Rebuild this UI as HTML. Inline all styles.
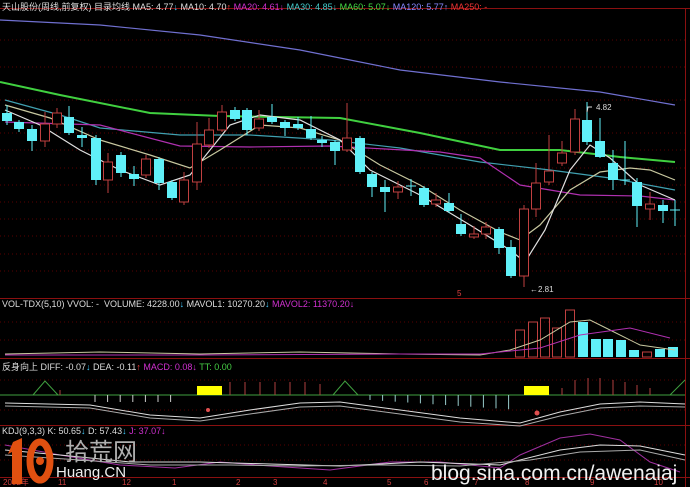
<!DOCTYPE html>
<html><head><meta charset="utf-8"><style>
html,body{margin:0;padding:0;background:#000;width:690px;height:487px;overflow:hidden}
.t{position:absolute;font:9px "Liberation Sans","Noto Sans CJK SC",sans-serif;white-space:nowrap}
</style></head><body>
<svg id="s" width="690" height="487" style="position:absolute;left:0;top:0">
<g stroke="#5a0000" stroke-width="1" stroke-dasharray="1,3">
<line x1="0" y1="40" x2="685" y2="40"/><line x1="0" y1="67" x2="685" y2="67"/><line x1="0" y1="100" x2="685" y2="100"/><line x1="0" y1="133" x2="685" y2="133"/><line x1="0" y1="150" x2="685" y2="150"/><line x1="0" y1="168" x2="685" y2="168"/><line x1="0" y1="185" x2="685" y2="185"/><line x1="0" y1="202" x2="685" y2="202"/><line x1="0" y1="219" x2="685" y2="219"/><line x1="0" y1="236" x2="685" y2="236"/><line x1="0" y1="254" x2="685" y2="254"/><line x1="0" y1="271" x2="685" y2="271"/>
<line x1="0" y1="322" x2="685" y2="322"/><line x1="0" y1="340" x2="685" y2="340"/><line x1="0" y1="380" x2="685" y2="380"/><line x1="0" y1="410" x2="685" y2="410"/><line x1="0" y1="445" x2="685" y2="445"/><line x1="0" y1="460" x2="685" y2="460"/>
</g>
<g stroke="#8a1010" stroke-width="1">
<line x1="0" y1="8.5" x2="690" y2="8.5"/><line x1="0" y1="298.5" x2="690" y2="298.5"/><line x1="0" y1="358.5" x2="690" y2="358.5"/><line x1="0" y1="425.5" x2="690" y2="425.5"/><line x1="0" y1="477.5" x2="690" y2="477.5"/><line x1="685.5" y1="8" x2="685.5" y2="487"/>
</g>
<g fill="none" stroke-width="1.2">
<polyline stroke="#7070d0" points="0,20 100,25 200,35 300,50 400,70 500,82 600,92 675,105"/>
<polyline stroke="#40d040" stroke-width="2" points="0,82 60,95 150,113 220,116 340,118 420,133 500,150 560,150 620,157 675,162"/>
<polyline stroke="#40a0b0" points="5,100 60,115 100,128 180,135 250,135 330,140 400,148 480,162 550,170 610,178 675,190"/>
<polyline stroke="#b030b0" points="5,122 100,125 180,146 250,147 330,146 440,152 480,158 520,185 580,195 640,196 675,200"/>
<polyline stroke="#c8c8a0" points="5,105 50,118 100,140 150,155 190,168 220,150 260,125 300,128 340,140 380,165 420,185 460,210 500,232 520,240 540,225 570,190 600,172 630,168 650,170 675,180"/>
<polyline stroke="#e0e0e0" points="5,110 40,125 80,150 120,170 160,185 190,175 230,125 260,115 300,120 340,140 370,170 420,195 470,225 510,250 525,262 545,230 570,170 590,145 610,158 640,185 675,200"/>
</g>
<g id="c"></g>
<text x="596" y="110" fill="#ddd" font-size="8" font-family="Liberation Sans">4.82</text>
<polyline points="592,107 588,107 587,112" fill="none" stroke="#ddd"/>
<text x="530" y="292" fill="#ddd" font-size="8" font-family="Liberation Sans">←2.81</text>
<text x="457" y="296" fill="#e04040" font-size="8" font-family="Liberation Sans">5</text>
<g fill="none" stroke-width="1">
<polyline stroke="#c8c8a0" points="5,354 100,352 200,354 300,352 400,354 480,355 510,350 540,340 570,322 590,320 610,330 640,345 675,350"/>
<polyline stroke="#b030b0" points="5,355 200,355 400,354 480,354 540,348 580,335 630,328 670,338"/>
<polyline stroke="#40a040" points="0,395 685,395"/>
<polyline stroke="#40a040" points="33,395 45,381 58,395"/><polyline stroke="#40a040" points="333,395 345,381 358,395"/><polyline stroke="#40a040" points="670,395 685,380"/>
<polyline stroke="#ddd" points="5,403 90,405 150,415 200,418 250,410 300,403 340,402 400,410 460,418 520,423 560,412 600,404 640,402 685,404"/>
<polyline stroke="#aaa" points="5,406 90,408 150,418 200,421 250,414 300,407 340,406 400,414 460,422 520,426 560,416 600,408 640,406 685,407"/>
<polyline stroke="#a030a0" points="5,445 60,455 120,465 175,468 220,462 270,466 330,470 390,462 440,462 500,468 520,455 560,438 590,434 620,440 650,462 680,472"/>
<polyline stroke="#ddd" points="5,450 60,455 130,462 200,462 270,464 340,466 420,462 500,465 560,450 600,445 640,446 685,455"/>
<polyline stroke="#aaa" points="5,455 80,460 150,465 230,465 300,466 380,465 460,466 530,460 580,452 640,450 685,460"/>
</g>
<g id="m"></g>
<rect x="197" y="386" width="25" height="9" fill="#ffff00"/>
<rect x="524" y="386" width="25" height="9" fill="#ffff00"/>
<circle cx="208" cy="410" r="2" fill="#e05050"/><circle cx="537" cy="413" r="2.5" fill="#e05050"/>
<text x="3" y="485" fill="#d04040" font-size="8" font-family="Liberation Sans">2002年</text>
<g fill="#d04040" font-size="8" font-family="Liberation Sans"><text x="58" y="485">11</text><text x="122" y="485">12</text><text x="172" y="485">1</text><text x="236" y="485">2</text><text x="273" y="485">3</text><text x="323" y="485">4</text><text x="387" y="485">5</text><text x="424" y="485">6</text><text x="474" y="485">7</text><text x="525" y="485">8</text><text x="590" y="485">9</text><text x="654" y="485">10</text></g>
<path d="M13,442 L22,438 L22,484 L12,484 L12,452 L8,454 Z" fill="#e05010"/>
<ellipse cx="40" cy="461" rx="10" ry="19" fill="none" stroke="#e05010" stroke-width="7"/>
<circle cx="40" cy="461" r="4" fill="#e05010"/>
<text x="65" y="460" fill="#b0b0b0" font-size="24" font-family="Noto Sans CJK SC,sans-serif">拾荒网</text>
<text x="56" y="477" fill="#eee" font-size="15" font-family="Liberation Sans">Huang.CN</text>
<text x="431" y="480" fill="#f0f0f0" font-size="21" font-family="Liberation Sans">blog.sina.com.cn/awenaiaj</text>
</svg>
<div class="t" style="left:2px;top:0px;color:#ddd">天山股份(周线,前复权) 目录均线 MA5: 4.77<span style="color:#4cf">↓</span> MA10: 4.70<span style="color:#f44">↑</span> <span style="color:#d030d0">MA20: 4.61↓</span> <span style="color:#4cc">MA30: 4.85↓</span> <span style="color:#4d4">MA60: 5.07↓</span> <span style="color:#88f">MA120: 5.77↑</span> <span style="color:#e33">MA250: -</span></div>
<div class="t" style="left:2px;top:299px;color:#ddd">VOL-TDX(5,10) VVOL: -&nbsp; VOLUME: 4228.00<span style="color:#4cf">↓</span> MAVOL1: 10270.20<span style="color:#4cf">↓</span> <span style="color:#d030d0">MAVOL2: 11370.20↓</span></div>
<div class="t" style="left:2px;top:360px;color:#ddd">反身向上 DIFF: -0.07<span style="color:#4cf">↓</span> DEA: -0.11<span style="color:#f44">↑</span> <span style="color:#d030d0">MACD: 0.08↓</span> <span style="color:#4c4">TT: 0.00</span></div>
<div class="t" style="left:2px;top:426px;color:#ddd">KDJ(9,3,3) K: 50.65<span style="color:#4cf">↓</span> D: 57.43<span style="color:#4cf">↓</span> <span style="color:#d030d0">J: 37.07↓</span></div>
<script>
var C=[[7,113,121,105,125,'c'],[19,122,129,120,132,'c'],[32,129,141,125,151,'c'],[45,124,141,112,147,'r'],[57,113,124,108,128,'r'],[69,117,133,106,135,'c'],[82,135,138,127,147,'c'],[96,138,180,135,185,'c'],[108,162,180,153,193,'r'],[121,155,173,152,177,'c'],[134,174,179,166,186,'c'],[146,159,175,155,178,'r'],[159,159,183,157,190,'c'],[172,182,198,180,200,'c'],[184,180,202,172,205,'r'],[197,144,182,122,190,'r'],[209,130,145,118,148,'r'],[222,112,130,105,132,'r'],[235,110,119,107,121,'c'],[247,110,130,108,135,'c'],[259,119,128,110,131,'r'],[272,117,122,104,124,'c'],[285,122,128,120,136,'c'],[298,124,128,117,130,'c'],[311,129,138,116,140,'c'],[322,140,143,136,147,'c'],[335,142,151,140,165,'c'],[347,138,150,103,152,'r'],[360,138,172,136,174,'c'],[372,174,187,172,197,'c'],[385,187,192,180,212,'c'],[398,187,192,181,199,'r'],[411,186,187,179,196,'x'],[424,188,205,186,207,'c'],[436,200,204,193,207,'r'],[449,203,211,193,213,'c'],[461,224,234,214,236,'c'],[474,234,237,226,239,'r'],[486,227,234,222,239,'r'],[499,229,248,227,254,'c'],[511,247,276,240,278,'c'],[524,209,276,205,287,'r'],[536,183,209,163,217,'r'],[549,171,182,135,185,'r'],[562,153,163,141,166,'r'],[575,119,152,109,155,'r'],[587,120,142,102,145,'c'],[600,141,157,118,158,'c'],[613,163,180,150,190,'c'],[625,180,181,141,185,'x'],[637,182,206,178,227,'c'],[650,204,209,192,220,'r'],[663,205,211,200,223,'c'],[675,210,211,200,226,'x']];
var V=[[520,330,'r'],[533,322,'r'],[545,318,'r'],[557,328,'r'],[570,310,'r'],[583,322,'c'],[596,339,'c'],[608,339,'c'],[621,340,'c'],[634,350,'c'],[647,352,'r'],[660,349,'c'],[673,347,'c']];
var h='';
C.forEach(function(a){var col=a[5]=='r'?'#c04040':'#60f0f8';
h+='<line x1="'+a[0]+'" y1="'+a[3]+'" x2="'+a[0]+'" y2="'+a[4]+'" stroke="'+col+'"/>';
if(a[5]=='x')h+='<line x1="'+(a[0]-5)+'" y1="'+a[1]+'" x2="'+(a[0]+5)+'" y2="'+a[1]+'" stroke="'+col+'"/>';
else if(a[5]=='c')h+='<rect x="'+(a[0]-5)+'" y="'+a[1]+'" width="10" height="'+(a[2]-a[1])+'" fill="'+col+'"/>';
else h+='<rect x="'+(a[0]-4.5)+'" y="'+a[1]+'" width="9" height="'+(a[2]-a[1])+'" fill="#000" stroke="'+col+'"/>';});
for(var i=0;i<40;i++){var x=7+i*12.7;var top=[350,351,352,349,350,348,352,353,351,349,352,350,351,349,353,351,348,350,352,351,350,349,352,351,350,353,349,350,347,351,352,353,352,351,350,352,351,353,351,346][i];V.unshift([x,top,i%3==0?'r':'c']);}
V.forEach(function(v){if(v[2]=='c')h+='<rect x="'+(v[0]-5)+'" y="'+v[1]+'" width="10" height="'+(357-v[1])+'" fill="#60f0f8"/>';else h+='<rect x="'+(v[0]-4.5)+'" y="'+v[1]+'" width="9" height="'+(357-v[1])+'" fill="none" stroke="#c04040"/>';});
document.getElementById('c').innerHTML=h;
var m='';
[[60,390],[230,382],[245,382],[260,382],[275,382],[290,382],[305,382],[320,384],[562,388],[575,380],[588,378],[600,378],[613,380],[625,382],[637,385],[650,388]].forEach(function(p){m+='<line x1="'+p[0]+'" y1="'+p[1]+'" x2="'+p[0]+'" y2="395" stroke="#b04040"/>';});
for(var x=95;x<180;x+=12.6)m+='<line x1="'+x+'" y1="395" x2="'+x+'" y2="402" stroke="#ccc"/>';
for(var x=370;x<520;x+=12.6)m+='<line x1="'+x+'" y1="395" x2="'+x+'" y2="'+(400+(x-370)/15)+'" stroke="#9cc"/>';
document.getElementById('m').innerHTML=m;
</script>
</body></html>
